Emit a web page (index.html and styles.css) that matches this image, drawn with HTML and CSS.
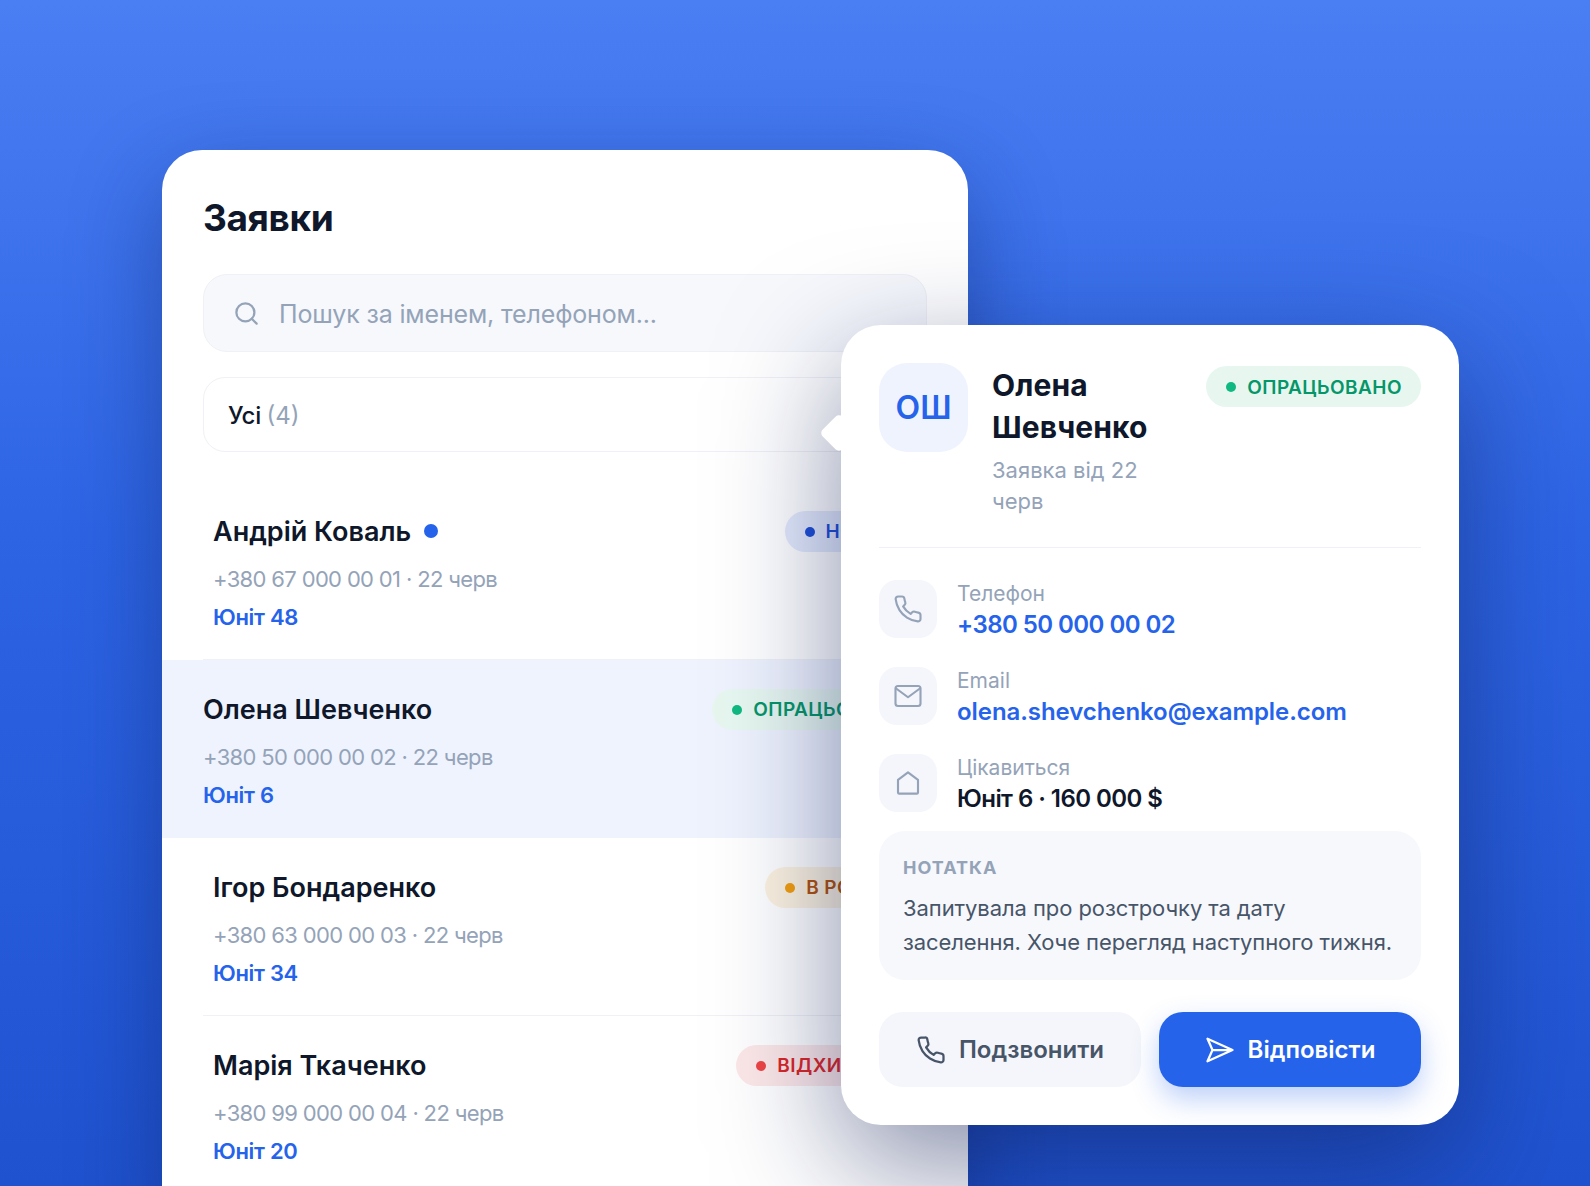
FILE: index.html
```html
<!DOCTYPE html>
<html lang="uk">
<head>
    <meta charset="UTF-8">
    <meta name="viewport" content="width=device-width, initial-scale=1.0">
    <title>Заявки</title>
    <link rel="stylesheet" href="styles.css">
</head>
<body>
    <div class="stage">
        <div class="list-card">
            <h1 class="list-title">Заявки</h1>
            <label class="search-bar">
                <svg class="search-icon" viewBox="0 0 24 24"><circle cx="11" cy="11" r="8"/><path d="m21 21-4.3-4.3"/></svg>
                <input type="text" placeholder="Пошук за іменем, телефоном...">
            </label>
            <div class="filter-bar">Усі <span class="filter-count">(4)</span></div>

            <div class="lead">
                <div class="lead-top">
                    <div class="lead-name">Андрій Коваль <span class="unread-dot"></span></div>
                    <span class="badge badge-new"><i></i>НОВИЙ</span>
                </div>
                <div class="lead-meta">+380 67 000 00 01 · 22 черв</div>
                <div class="lead-unit">Юніт 48</div>
            </div>

            <div class="lead lead-active">
                <div class="lead-top">
                    <div class="lead-name">Олена Шевченко</div>
                    <span class="badge badge-done"><i></i>ОПРАЦЬОВАНО</span>
                </div>
                <div class="lead-meta">+380 50 000 00 02 · 22 черв</div>
                <div class="lead-unit">Юніт 6</div>
            </div>

            <div class="lead">
                <div class="lead-top">
                    <div class="lead-name">Ігор Бондаренко</div>
                    <span class="badge badge-work"><i></i>В РОБОТІ</span>
                </div>
                <div class="lead-meta">+380 63 000 00 03 · 22 черв</div>
                <div class="lead-unit">Юніт 34</div>
            </div>

            <div class="lead">
                <div class="lead-top">
                    <div class="lead-name">Марія Ткаченко</div>
                    <span class="badge badge-rejected"><i></i>ВІДХИЛЕНО</span>
                </div>
                <div class="lead-meta">+380 99 000 00 04 · 22 черв</div>
                <div class="lead-unit">Юніт 20</div>
            </div>
        </div>

        <div class="detail-card">
            <span class="detail-arrow"></span>
            <div class="detail-head">
                <div class="avatar">ОШ</div>
                <div class="detail-who">
                    <div class="detail-name">Олена Шевченко</div>
                    <div class="detail-date">Заявка від 22 черв</div>
                </div>
                <span class="badge badge-done"><i></i>ОПРАЦЬОВАНО</span>
            </div>

            <div class="info-row">
                <div class="info-icon">
                    <svg viewBox="0 0 24 24"><path d="M22 16.92v3a2 2 0 0 1-2.18 2 19.79 19.79 0 0 1-8.63-3.07 19.5 19.5 0 0 1-6-6 19.79 19.79 0 0 1-3.07-8.67A2 2 0 0 1 4.11 2h3a2 2 0 0 1 2 1.72c.13.96.36 1.9.7 2.81a2 2 0 0 1-.45 2.11L8.09 9.91a16 16 0 0 0 6 6l1.27-1.27a2 2 0 0 1 2.11-.45c.91.34 1.85.57 2.81.7A2 2 0 0 1 22 16.92z"/></svg>
                </div>
                <div>
                    <div class="info-label">Телефон</div>
                    <div class="info-value info-link">+380 50 000 00 02</div>
                </div>
            </div>
            <div class="info-row">
                <div class="info-icon">
                    <svg viewBox="0 0 24 24"><rect x="2" y="4" width="20" height="16" rx="2"/><path d="m2.5 6 9.5 7 9.5-7"/></svg>
                </div>
                <div>
                    <div class="info-label">Email</div>
                    <div class="info-value info-link info-email">olena.shevchenko@example.com</div>
                </div>
            </div>
            <div class="info-row">
                <div class="info-icon">
                    <svg viewBox="0 0 24 24"><path d="M12 3.500 20 9.500V19.500a1 1 0 0 1-1 1H5a1 1 0 0 1-1-1V9.500z"/></svg>
                </div>
                <div>
                    <div class="info-label">Цікавиться</div>
                    <div class="info-value">Юніт 6 · 160 000 $</div>
                </div>
            </div>

            <div class="note">
                <div class="note-label">НОТАТКА</div>
                <div class="note-text">Запитувала про розстрочку та дату заселення. Хоче перегляд наступного тижня.</div>
            </div>

            <div class="actions">
                <button class="btn btn-call">
                    <svg viewBox="0 0 24 24"><path d="M22 16.92v3a2 2 0 0 1-2.18 2 19.79 19.79 0 0 1-8.63-3.07 19.5 19.5 0 0 1-6-6 19.79 19.79 0 0 1-3.07-8.67A2 2 0 0 1 4.11 2h3a2 2 0 0 1 2 1.72c.13.96.36 1.9.7 2.81a2 2 0 0 1-.45 2.11L8.09 9.91a16 16 0 0 0 6 6l1.27-1.27a2 2 0 0 1 2.11-.45c.91.34 1.85.57 2.81.7A2 2 0 0 1 22 16.92z"/></svg>
                    Подзвонити
                </button>
                <button class="btn btn-reply">
                    <svg viewBox="0 0 24 24"><path d="M2 3l20 9-20 9 4-9zM6 12h16"/></svg>
                    Відповісти
                </button>
            </div>
        </div>
    </div>
</body>
</html>
```

FILE: styles.css
```css
* {
    box-sizing: border-box;
}
html, body {
    margin: 0;
    height: 100%;
}
body {
    font-family: Inter, "Noto Sans", sans-serif;
    color: #0f172a;
    overflow: hidden;
}
.stage {
    position: relative;
    height: 1186px;
    overflow: hidden;
    padding: 150px 0 0 162px;
    background: linear-gradient(180deg, #4a7ef3 0%, #2d64e4 45%, #1f52cf 100%);
}

/* list card */
.list-card {
    width: 806px;
    height: 1100px;
    padding: 43px 41px 0;
    background: #fff;
    border-radius: 40px;
    box-shadow: 0 30px 90px rgba(12, 30, 90, 0.42);
}
.list-title {
    margin: 0 0 31px;
    font-size: 37px;
    line-height: 50px;
    font-weight: 700;
    letter-spacing: -0.4px;
}
.search-bar {
    display: flex;
    align-items: center;
    gap: 17px;
    height: 78px;
    padding: 0 29px;
    background: #f6f8fc;
    border: 1px solid #eff1f6;
    border-radius: 24px;
}
.search-icon {
    width: 27px;
    height: 27px;
    fill: none;
    stroke: #94a3b8;
    stroke-width: 2;
    stroke-linecap: round;
}
.search-bar input {
    flex: 1;
    padding: 2px 0 0 2px;
    border: none;
    outline: none;
    background: none;
    font: 400 25px Inter, "Noto Sans", sans-serif;
    letter-spacing: -0.15px;
}
.search-bar input::placeholder {
    color: #94a3b8;
    opacity: 1;
}
.filter-bar {
    display: flex;
    align-items: center;
    gap: 5px;
    height: 75px;
    margin-top: 25px;
    margin-bottom: 30px;
    padding: 1px 24px 0;
    border: 1px solid #eff1f6;
    border-radius: 22px;
    font-size: 24px;
    font-weight: 500;
}
.filter-count {
    color: #94a3b8;
    font-weight: 400;
}

/* leads */
.lead {
    height: 178px;
    padding: 28px 10px 0;
    border-bottom: 1px solid #eff1f6;
}
.lead-active {
    margin: 0 -41px;
    padding: 28px 41px 0;
    background: #eff3fe;
    border-bottom: none;
}
.lead-top {
    display: flex;
    align-items: center;
    justify-content: space-between;
    height: 42px;
}
.lead-name {
    display: flex;
    align-items: center;
    gap: 13px;
    font-size: 27px;
    font-weight: 600;
}
.unread-dot {
    width: 14px;
    height: 14px;
    border-radius: 50%;
    background: #2563eb;
}
.lead-meta {
    margin-top: 12px;
    font-size: 22px;
    line-height: 30px;
    color: #94a3b8;
    letter-spacing: -0.65px;
}
.lead-unit {
    margin-top: 9px;
    font-size: 22px;
    line-height: 28px;
    font-weight: 600;
    color: #2563eb;
    letter-spacing: -0.3px;
}

/* badges */
.badge {
    display: inline-flex;
    align-items: center;
    flex-shrink: 0;
    gap: 11px;
    height: 41px;
    padding: 1px 19px 0 20px;
    border-radius: 21px;
    font-size: 19px;
    font-weight: 600;
    letter-spacing: 0.45px;
}
.badge i {
    width: 10px;
    height: 10px;
    border-radius: 50%;
}
.badge-new { background: #e4ebfd; color: #1d4ed8; }
.badge-new i { background: #1d4ed8; }
.badge-done { background: #e7f7f0; color: #059669; }
.badge-done i { background: #10b981; }
.badge-work { background: #fdf3e0; color: #b45309; }
.badge-work i { background: #f59e0b; }
.badge-rejected { background: #fde8e8; color: #dc2626; }
.badge-rejected i { background: #ef4444; }

/* detail card */
.detail-card {
    position: absolute;
    left: 841px;
    top: 325px;
    width: 618px;
    height: 800px;
    padding: 38px;
    background: #fff;
    border-radius: 40px;
    box-shadow: 0 40px 120px rgba(15, 30, 85, 0.5);
}
.detail-arrow {
    position: absolute;
    left: -16px;
    top: 94px;
    width: 28px;
    height: 28px;
    background: #fff;
    border-radius: 5px;
    transform: rotate(45deg);
}
.detail-head {
    display: flex;
    align-items: flex-start;
    gap: 24px;
    height: 185px;
    border-bottom: 1px solid #eef1f6;
}
.avatar {
    display: flex;
    align-items: center;
    justify-content: center;
    flex-shrink: 0;
    width: 89px;
    height: 89px;
    background: #eff3fe;
    border-radius: 28px;
    font-size: 32px;
    font-weight: 600;
    color: #2563eb;
}
.detail-who {
    flex: 1;
}
.detail-name {
    padding-top: 1px;
    font-size: 30px;
    line-height: 42px;
    font-weight: 700;
    letter-spacing: 0.1px;
}
.detail-date {
    margin-top: 7px;
    font-size: 22px;
    line-height: 31px;
    color: #94a3b8;
}
.detail-head .badge {
    margin-top: 3px;
}
.info-row {
    display: flex;
    align-items: flex-start;
    gap: 20px;
    height: 58px;
    margin-top: 29px;
}
.detail-head + .info-row {
    margin-top: 32px;
}
.info-icon {
    display: flex;
    align-items: center;
    justify-content: center;
    flex-shrink: 0;
    width: 58px;
    height: 58px;
    background: #f5f6fb;
    border-radius: 18px;
}
.info-icon svg {
    width: 30px;
    height: 30px;
    fill: none;
    stroke: #94a3b8;
    stroke-width: 1.7;
    stroke-linejoin: round;
    stroke-linecap: round;
}
.info-label {
    font-size: 21px;
    line-height: 28px;
    color: #94a3b8;
}
.info-value {
    margin-top: 1px;
    font-size: 24px;
    line-height: 32px;
    font-weight: 600;
    letter-spacing: -0.55px;
}
.info-link {
    color: #2563eb;
}
.info-email {
    letter-spacing: -0.07px;
}
.note {
    height: 149px;
    margin-top: 19px;
    padding: 24px 24px;
    background: #f7f8fc;
    border-radius: 26px;
}
.note-label {
    font-size: 18px;
    line-height: 26px;
    font-weight: 700;
    letter-spacing: 1px;
    color: #94a3b8;
}
.note-text {
    margin-top: 10px;
    font-size: 22px;
    line-height: 34px;
    color: #475569;
    letter-spacing: -0.08px;
}
.actions {
    display: flex;
    gap: 18px;
    margin-top: 32px;
}
.btn {
    display: flex;
    align-items: center;
    justify-content: center;
    flex: 1;
    gap: 13px;
    height: 75px;
    border: none;
    border-radius: 24px;
    font: 600 24px Inter, "Noto Sans", sans-serif;
    cursor: pointer;
}
.btn svg {
    width: 30px;
    height: 30px;
    fill: none;
    stroke: currentColor;
    stroke-width: 1.8;
    stroke-linejoin: round;
    stroke-linecap: round;
}
.btn-call {
    background: #f5f6fb;
    color: #475569;
}
.btn-reply {
    background: #2563eb;
    color: #fff;
    box-shadow: 0 12px 28px rgba(37, 99, 235, 0.3);
}
```
